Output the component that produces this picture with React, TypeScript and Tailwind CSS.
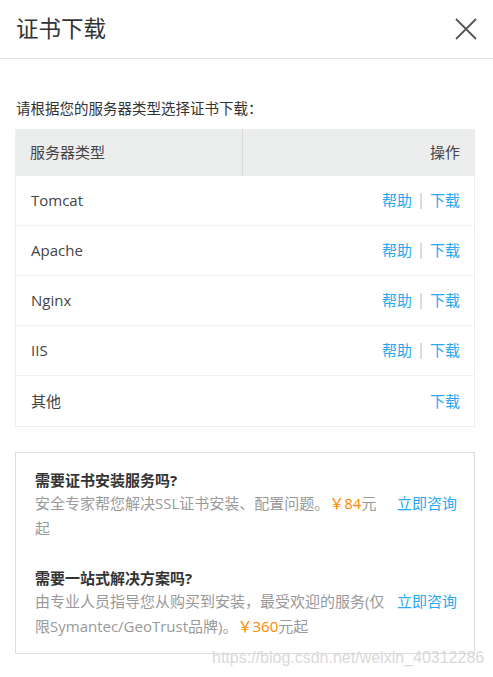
import React from "react";

const rows = [
  { name: "Tomcat", help: true },
  { name: "Apache", help: true },
  { name: "Nginx", help: true },
  { name: "IIS", help: true },
  { name: "其他", help: false },
];

function Actions({ help }: { help: boolean }) {
  return (
    <div className="flex items-center text-[15px] text-[#27a8f4]">
      {help && (
        <>
          <a href="#">帮助</a>
          <span className="mx-[8px] h-[16px] w-[2px] bg-[#dcdcdc]" />
        </>
      )}
      <a href="#">下载</a>
    </div>
  );
}

export default function App() {
  return (
    <div
      className="relative h-[677px] w-[493px] overflow-hidden bg-white text-[#333]"
      style={{ fontFamily: '"Open Sans", "Noto Sans CJK SC", sans-serif' }}
    >
      <div className="flex h-[59px] items-center justify-between border-b border-[#e3e3e3] pl-[16px] pr-[16px]">
        <h2 className="text-[22.5px] font-normal text-[#333]">证书下载</h2>
        <button type="button" className="text-[#555]">
          <svg className="h-[22px] w-[22px]" viewBox="0 0 22 22" fill="none" stroke="currentColor" strokeWidth={1.8}>
            <path d="M1 1l20 20M21 1L1 21" />
          </svg>
        </button>
      </div>

      <div className="pl-[15px] pr-[18px] pt-[40px]">
        <p className="mb-[10px] pl-[1px] text-[14.5px] leading-[20px] text-[#333]">请根据您的服务器类型选择证书下载：</p>

        <div className="border-x border-b border-[#eeeeee]">
          <div className="flex h-[47px] items-center bg-[#eceded] text-[15px] text-[#444]">
            <div className="flex h-full w-[227px] items-center border-r border-[#d8d8d8] pl-[14px]">服务器类型</div>
            <div className="flex-1 pr-[14px] text-right">操作</div>
          </div>
          {rows.map((r, i) => (
            <div
              key={r.name}
              className={`flex h-[50px] items-center justify-between pl-[15px] pr-[14px] text-[15px] text-[#444] ${
                i < rows.length - 1 ? "border-b border-[#f2f2f2]" : ""
              }`}
            >
              <span>{r.name}</span>
              <Actions help={r.help} />
            </div>
          ))}
        </div>

        <div className="mt-[25px] border border-[#dddddd] pb-[14px] pl-[19px] pr-[16px] pt-[16px]">
          <div>
            <h3 className="text-[15px] font-bold leading-[22px] text-[#333]">需要证书安装服务吗?</h3>
            <div className="flex">
              <p className="w-[352px] text-[15px] leading-[25px] text-[#999]">
                安全专家帮您解决SSL证书安装、配置问题。<span className="text-[#ff8a00]">￥84</span>元起
              </p>
              <a href="#" className="ml-[10px] text-[15px] leading-[25px] text-[#27a8f4] whitespace-nowrap">
                立即咨询
              </a>
            </div>
          </div>
          <div className="mt-[26px]">
            <h3 className="text-[15px] font-bold leading-[22px] text-[#333]">需要一站式解决方案吗?</h3>
            <div className="flex">
              <p className="w-[352px] text-[15px] leading-[25px] text-[#999]">
                由专业人员指导您从购买到安装，最受欢迎的服务(仅限Symantec/GeoTrust品牌)。
                <span className="text-[#ff8a00]">￥360</span>元起
              </p>
              <a href="#" className="ml-[10px] text-[15px] leading-[25px] text-[#27a8f4] whitespace-nowrap">
                立即咨询
              </a>
            </div>
          </div>
        </div>
      </div>

      <div
        className="pointer-events-none absolute left-[212px] top-[647px] text-[16px] leading-[22px] text-[#d9d9d9]"
        style={{ fontFamily: '"Liberation Sans", Arial, sans-serif' }}
      >
        https://blog.csdn.net/weixin_40312286
      </div>
    </div>
  );
}
